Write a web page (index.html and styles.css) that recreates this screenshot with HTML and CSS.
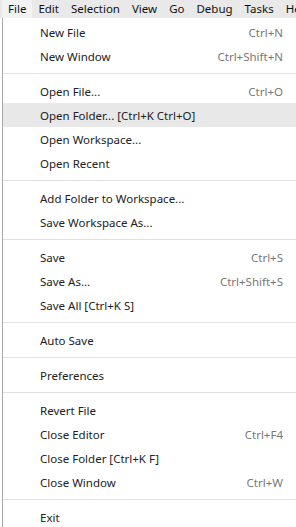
FILE: index.html
```html
<!DOCTYPE html>
<html>
<head>
    <title>File Menu</title>
    <link rel="stylesheet" href="styles.css">
</head>
<body>
    <div class="menubar">
        <span class="menubar-item active">File</span>
        <span class="menubar-item">Edit</span>
        <span class="menubar-item">Selection</span>
        <span class="menubar-item">View</span>
        <span class="menubar-item">Go</span>
        <span class="menubar-item">Debug</span>
        <span class="menubar-item">Tasks</span>
        <span class="menubar-item">Help</span>
    </div>

    <div class="menu">
        <div class="menu-item"><span>New File</span><span class="key">Ctrl+N</span></div>
        <div class="menu-item"><span>New Window</span><span class="key">Ctrl+Shift+N</span></div>
        <div class="separator"></div>
        <div class="menu-item"><span>Open File...</span><span class="key">Ctrl+O</span></div>
        <div class="menu-item hover"><span>Open Folder... [Ctrl+K Ctrl+O]</span></div>
        <div class="menu-item"><span>Open Workspace...</span></div>
        <div class="menu-item"><span>Open Recent</span></div>
        <div class="separator"></div>
        <div class="menu-item"><span>Add Folder to Workspace...</span></div>
        <div class="menu-item"><span>Save Workspace As...</span></div>
        <div class="separator"></div>
        <div class="menu-item"><span>Save</span><span class="key">Ctrl+S</span></div>
        <div class="menu-item"><span>Save As...</span><span class="key">Ctrl+Shift+S</span></div>
        <div class="menu-item"><span>Save All [Ctrl+K S]</span></div>
        <div class="separator"></div>
        <div class="menu-item"><span>Auto Save</span></div>
        <div class="separator"></div>
        <div class="menu-item"><span>Preferences</span></div>
        <div class="separator"></div>
        <div class="menu-item"><span>Revert File</span></div>
        <div class="menu-item"><span>Close Editor</span><span class="key">Ctrl+F4</span></div>
        <div class="menu-item"><span>Close Folder [Ctrl+K F]</span></div>
        <div class="menu-item"><span>Close Window</span><span class="key">Ctrl+W</span></div>
        <div class="separator"></div>
        <div class="menu-item"><span>Exit</span></div>
    </div>
</body>
</html>
```

FILE: styles.css
```css
body {
    margin: 0;
    width: 296px;
    overflow: hidden;
    font-family: "Noto Sans", "Open Sans", sans-serif;
    font-size: 11.5px;
    color: #222;
    background: #fff;
}
.menubar {
    display: flex;
    height: 18px;
    padding-left: 2px;
    background-color: #e9e9e9;
    white-space: nowrap;
}
.menubar-item {
    padding: 0 6px;
    line-height: 18px;
    color: #111;
}
.menubar-item.active {
    background-color: #f3f3f3;
}
.menu {
    margin-left: 2px;
    width: 300px;
    border-left: 1px solid #a9a9a9;
    padding-top: 2px;
}
.menu-item {
    display: flex;
    justify-content: space-between;
    height: 24px;
    line-height: 25px;
    padding: 0 20px 0 37px;
    white-space: nowrap;
}
.menu-item.hover {
    background-color: #e8e8e8;
}
.key {
    color: #777;
}
.separator {
    height: 1px;
    margin: 5px 0 5px 0;
    background-color: #e2e2e2;
}
```
